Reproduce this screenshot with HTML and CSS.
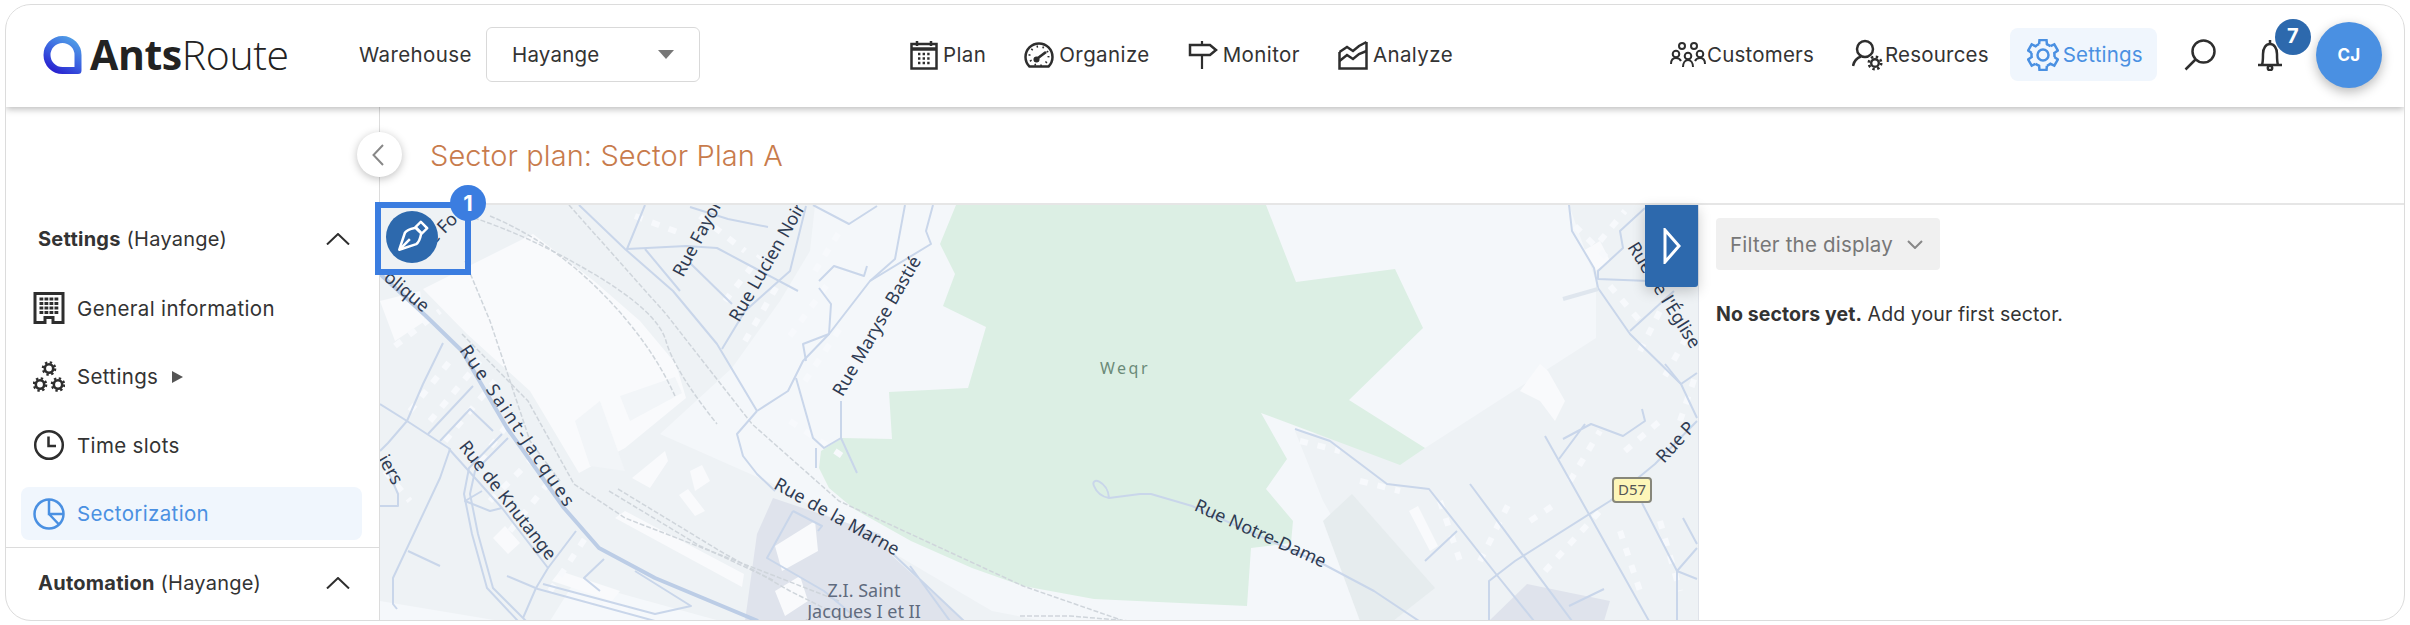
FILE: index.html
```html
<!DOCTYPE html>
<html lang="en">
<head>
  <meta charset="UTF-8">
  <title>AntsRoute - Sector plan</title>
  <link rel="stylesheet" href="styles.css">
</head>
<body>
  <div class="window">
    <header class="topbar">
      <a class="brand" href="#">
        <svg class="brand-mark" width="39" height="38" viewBox="0 0 39 38">
          <defs>
            <linearGradient id="logoGrad" x1="0.8" y1="0" x2="0.2" y2="1">
              <stop offset="0" stop-color="#4f9ae6"/>
              <stop offset="0.55" stop-color="#3a5fe0"/>
              <stop offset="1" stop-color="#2a24d0"/>
            </linearGradient>
          </defs>
          <path d="M35 34.500H19.500A15.500 15.500 0 1 1 35 19z" fill="none" stroke="url(#logoGrad)" stroke-width="7" stroke-linejoin="round"/>
        </svg>
        <span class="brand-name"><b>Ants</b>Route</span>
      </a>
      <span class="wh-label">Warehouse</span>
      <div class="wh-select">Hayange<i class="caret"></i></div>

      <nav class="nav-main">
        <a class="nav-item" href="#">
          <svg width="28" height="30" viewBox="0 0 28 30" class="ico">
            <rect x="1.500" y="4" width="25" height="24.500"/>
            <path d="M1.500 9h25" stroke-width="3.500"/>
            <path d="M7 1v5M21 1v5"/>
            <path d="M8 14h13M8 18.500h13M8 23h13" stroke-width="2.500" stroke-dasharray="2.400 2.200"/>
          </svg>
          Plan
        </a>
        <a class="nav-item" href="#">
          <svg width="30" height="26" viewBox="0 0 30 26" class="ico">
            <path d="M5.500 24.500a13.500 13.500 0 1 1 19 0z"/>
            <circle cx="15" cy="14" r="9.500" stroke-width="2" stroke-dasharray="1.500 4.500"/>
            <path d="M12 17.500L22 10" stroke-width="2.800"/>
            <circle cx="12.500" cy="17.500" r="1.800" class="solid"/>
          </svg>
          Organize
        </a>
        <a class="nav-item" href="#">
          <svg width="30" height="28" viewBox="0 0 30 28" class="ico">
            <path d="M14 0v4M14 14v14" stroke-width="2.200"/>
            <path d="M2 4h20l6 5-6 5H2z"/>
          </svg>
          Monitor
        </a>
        <a class="nav-item" href="#">
          <svg width="30" height="30" viewBox="0 0 30 30" class="ico">
            <path d="M1.500 12v16.500H28.500V2"/>
            <path d="M1.500 12L9 7l6 4 6-5 7.500-4"/>
            <path d="M1.500 21L9 15l6 4 6-5 7.500-3"/>
          </svg>
          Analyze
        </a>
      </nav>

      <nav class="nav-right">
        <a class="nav-item" href="#">
          <svg width="36" height="26" viewBox="0 0 36 26" class="ico thin">
            <circle cx="12" cy="4" r="3"/><circle cx="24" cy="4" r="3"/>
            <circle cx="6" cy="12" r="3.300"/><circle cx="18" cy="14" r="3.300"/><circle cx="30" cy="12" r="3.300"/>
            <path d="M1 22c0-4 2-6 5-6s4 1 5 3M13 25c0-4 2-7 5-7s5 3 5 7M25 19c1-2 2-3 5-3s5 2 5 6"/>
          </svg>
          Customers
        </a>
        <a class="nav-item" href="#">
          <svg width="32" height="32" viewBox="0 0 32 32" class="ico">
            <circle cx="13" cy="10" r="8"/>
            <path d="M1 27c1-5 4-8 8-9.500"/>
            <circle cx="23" cy="24" r="3.800" stroke-width="2.400"/>
            <circle cx="23" cy="24" r="6.200" stroke-width="2.600" stroke-dasharray="2.400 2.470"/>
          </svg>
          Resources
        </a>
        <a class="nav-item is-active" href="#">
          <svg width="32" height="32" viewBox="0 0 32 32" class="ico blue">
            <path d="M12.100 5.200L12.500.9h7l.4 4.300A11.500 11.500 0 0 1 23.400 7.200"/>
            <path d="M12.100 5.200L12.500.9h7l.4 4.300A11.500 11.500 0 0 1 23.400 7.200" transform="rotate(60 16 16)"/>
            <path d="M12.100 5.200L12.500.9h7l.4 4.300A11.500 11.500 0 0 1 23.400 7.200" transform="rotate(120 16 16)"/>
            <path d="M12.100 5.200L12.500.9h7l.4 4.300A11.500 11.500 0 0 1 23.400 7.200" transform="rotate(180 16 16)"/>
            <path d="M12.100 5.200L12.500.9h7l.4 4.300A11.500 11.500 0 0 1 23.400 7.200" transform="rotate(240 16 16)"/>
            <path d="M12.100 5.200L12.500.9h7l.4 4.300A11.500 11.500 0 0 1 23.400 7.200" transform="rotate(300 16 16)"/>
            <circle cx="16" cy="16" r="5.500"/>
          </svg>
          Settings
        </a>
        <a class="tool-btn search" href="#">
          <svg width="32" height="32" viewBox="0 0 32 32" class="ico">
            <circle cx="19.500" cy="12.500" r="11"/>
            <path d="M11.500 20.500L1.500 30.500"/>
          </svg>
        </a>
        <a class="tool-btn bell" href="#">
          <svg width="26" height="32" viewBox="0 0 26 32" class="ico">
            <path d="M13 1v3"/>
            <path d="M1 26h24M5 26c1-3 1-7 1-11 0-6 3-10 7-10s7 4 7 10c0 4 0 8 1 11"/>
            <circle cx="13" cy="29" r="2.200"/>
          </svg>
          <span class="bell-count">7</span>
        </a>
        <a class="avatar" href="#">CJ</a>
      </nav>
    </header>

    <div class="body">
      <aside class="sidebar">
        <div class="side-head">
          <span><b>Settings</b> (Hayange)</span>
          <svg width="24" height="12" viewBox="0 0 24 12" class="ico thin"><path d="M1 11.500L12 1l11 10.500"/></svg>
        </div>
        <a class="side-item" href="#">
          <svg width="32" height="32" viewBox="0 0 32 32" class="ico">
            <path d="M2 1.500h28v29H20v-5h-8v5H2z" stroke-width="3"/>
            <path d="M6.500 7h19M6.500 11.500h19M6.500 16h19M6.500 20.500h19" stroke-width="3" stroke-dasharray="3.800 1.200"/>
          </svg>
          General information
        </a>
        <a class="side-item" href="#">
          <svg width="32" height="32" viewBox="0 0 32 32" class="ico">
            <circle cx="16" cy="7.500" r="4.200" stroke-width="2.600"/>
            <circle cx="16" cy="7.500" r="6.200" stroke-width="2.200" stroke-dasharray="2.400 2.470"/>
            <circle cx="7" cy="23.500" r="4.200" stroke-width="2.600"/>
            <circle cx="7" cy="23.500" r="6.200" stroke-width="2.200" stroke-dasharray="2.400 2.470"/>
            <circle cx="25" cy="23.500" r="4.200" stroke-width="2.600"/>
            <circle cx="25" cy="23.500" r="6.200" stroke-width="2.200" stroke-dasharray="2.400 2.470"/>
          </svg>
          Settings
          <i class="side-arrow"></i>
        </a>
        <a class="side-item" href="#">
          <svg width="32" height="32" viewBox="0 0 32 32" class="ico">
            <circle cx="16" cy="16" r="13.800"/>
            <path d="M15.500 7.500v9.500H23"/>
          </svg>
          Time slots
        </a>
        <a class="side-item is-active" href="#">
          <svg width="32" height="32" viewBox="0 0 32 32" class="ico blue">
            <circle cx="16" cy="16" r="14.500"/>
            <path d="M16 1.500V16h14.500M16 16l10 10.500"/>
          </svg>
          Sectorization
        </a>
        <div class="side-head side-head-line">
          <span><b>Automation</b> (Hayange)</span>
          <svg width="24" height="12" viewBox="0 0 24 12" class="ico thin"><path d="M1 11.500L12 1l11 10.500"/></svg>
        </div>
      </aside>

      <main class="main">
        <button class="collapse-btn">
          <svg width="12" height="22" viewBox="0 0 12 22" class="ico grey thin"><path d="M11 1L1.500 11 11 21"/></svg>
        </button>
        <h1 class="page-title">Sector plan: Sector Plan A</h1>
        <div class="workspace">
          <div class="map">
            <svg class="map-svg" width="1318" height="416" viewBox="380 204 1318 416">
              <rect x="380" y="204" width="1318" height="416" class="m-base"/>

              <!-- areas -->
              <path class="m-light" d="M815 204L810 250 780 300 732 367 660 433 773 483 890 550 992 610 1043 620H1440L1393 620 1323 500 1295 430 1425 447 1596 337V280L1569 204z"/>
              <path class="m-white" d="M423 288L533 233 594 280 640 320 676 363 686 397 625 447 579 472 530 390 467 333z"/>
              <path class="m-faint" d="M620 395L675 376 682 392 630 420zM575 420L600 400 625 470 590 465z"/>
              <path class="m-lighter" d="M380 620V600L500 620zM550 620L575 580 720 620z"/>
              <path class="m-green" d="M956 204L940 243 955 273 943 305 986 326 968 387 889 391 892 438 842 437 821 450 819 467 829 487 854 508 911 540 972 567 1023 585 1094 598 1180 602 1247 605 1251 547 1291 542 1293 520 1266 488 1287 458 1261 412 1400 464 1425 447 1349 399 1423 327 1395 268 1296 281 1266 204z"/>
              <path class="m-forestry" d="M1352 493L1435 587 1393 620H1360L1323 520z"/>
              <path class="m-zone" d="M773 497L880 533 890 553 964 620H745L757 533z"/>
              <path class="m-zone" d="M1489 620L1527 583 1610 600 1604 620z"/>

              <!-- blocks -->
              <path class="m-white" d="M615 517L625 510 744 573 742 586zM632 477L665 450 668 460 650 487zM690 470L702 464 710 480 695 490zM679 494L688 488 705 510 695 515zM493 537L505 525 520 542 508 553zM775 545L815 520 818 550 782 570zM775 590L800 575 808 600 785 615zM1409 510L1418 505 1438 545 1430 550zM1540 363L1548 370 1565 400 1555 420 1540 400 1520 390z"/>
              <path class="m-white" d="M380 300L420 290 425 320 395 340zM560 570L620 590 612 600 552 580zM1583 250L1600 240 1610 260 1595 270z"/>

              <!-- houses -->
              <path class="m-houses" d="M635 215L680 232M700 215L745 250M725 300L760 255M745 340L780 280M815 270L840 230M790 335L830 280M805 380L845 320M875 340L905 280M790 420L850 460"/>
              <path class="m-houses" d="M395 345L440 310M410 410L450 360M385 470L410 500M430 420L480 360M445 440L495 380M480 460L510 420M490 500L530 460M510 530L550 480M550 590L590 530M585 600L640 610"/>
              <path class="m-houses" d="M1575 225L1610 260M1600 240L1625 210M1610 285L1640 320M1640 350L1660 310M1665 375L1690 330M1680 420L1697 370M1360 480L1400 490M1300 440L1340 450M1440 500L1460 560M1480 560L1510 500M1530 520L1560 500M1545 570L1600 510M1620 530L1640 590M1660 520L1680 590M1625 450L1660 420M1570 480L1600 430"/>

              <!-- railway -->
              <g class="m-rail">
                <path d="M474 217Q530 235 594 273T666 340 717 423"/>
                <path d="M569 204L666 313 752 423 839 500 1023 585 1124 620"/>
                <path d="M462 333L528 400 574 483 625 517 762 570 839 600"/>
                <path d="M490 215Q550 240 600 290T675 395"/>
                <path d="M609 490L700 545 775 580"/>
                <path d="M618 488L720 550 790 590 850 620"/>
                <path d="M1020 615H1070L1130 620"/>
                <path d="M465 260L490 320 530 440 560 480"/>
              </g>

              <!-- roads -->
              <g class="m-road">
                <path d="M645 204L627 248 686 245 717 247 747 263 798 290"/>
                <path d="M690 206L728 218 768 226"/>
                <path d="M579 204L625 248 673 290 717 343 757 410"/>
                <path d="M757 410L737 433 743 455 757 473 775 490"/>
                <path d="M690 262L732 303"/>
                <path d="M680 290L645 248M722 348L745 310 790 270 806 205"/>
                <path d="M933 204L926 230 931 243 870 280 829 333 803 360 788 390 757 410"/>
                <path d="M819 280L834 265 864 275 867 265M819 287L831 303 829 333 803 343 806 360"/>
                <path d="M841 400L841 437 824 447 813 437 796 377M816 447V467M841 437L857 472"/>
                <path d="M813 204L849 223 877 205M905 204L895 258 870 280"/>
                <path d="M443 342L423 383 407 420 388 442 380 450M380 403L407 420 450 448 440 477 393 577 393 603 397 608"/>
                <path d="M428 433L473 385M440 440L470 408 493 430M408 550L440 565M380 505H398V493L388 470"/>
                <path d="M502 433L469 467 464 493 472 533 487 587 518 620M508 437L475 470 470 493 478 533 493 587 526 620"/>
                <path d="M449 448L502 507 548 567 536 587 523 617M482 490L465 500 490 510 502 507"/>
                <path d="M507 575L538 588 655 620M543 583L655 613 691 605 635 570M576 530L548 567M604 558L584 577 600 590"/>
                <path d="M793 510L767 557 824 590 860 620M793 510L822 525 818 530M893 553L964 620M910 565L950 620"/>
                <path d="M1569 204L1572 230 1594 267 1598 287 1630 333 1681 383 1697 417"/>
                <path d="M1645 207L1620 230 1623 247 1598 270V278L1649 280M1674 290L1630 330M1697 372L1681 383 1665 363"/>
                <path d="M1697 420L1655 463 1610 500 1515 560 1489 580V620"/>
                <path d="M1545 435L1649 620M1470 483L1572 620"/>
                <path d="M1295 428L1330 440 1387 483 1429 488 1496 573 1534 620"/>
                <path d="M1094 485C1090 475 1108 480 1109 497L1140 493 1151 493 1192 505 1323 563 1374 590 1419 620M1094 485Q1098 495 1109 497"/>
                <path d="M1457 530L1425 560M1642 502L1677 570 1697 578M1697 547L1677 570V620M1604 588L1569 605M1683 517L1697 543"/>
                <path d="M1563 438L1591 423 1623 435 1645 420 1642 408M1559 458L1585 423"/>
                <path class="m-road-pale" d="M1563 298L1598 288"/>
              </g>
              <path class="m-road-major" d="M380 273L426 315 462 350 507 427 564 507 599 547 655 577 758 620"/>

              <!-- labels -->
              <g class="m-label">
                <text x="423" y="312" text-anchor="end" transform="rotate(40 423 312)">olique</text>
                <text x="434" y="244" transform="rotate(-45 434 244)">e Fo</text>
                <text x="393" y="485" text-anchor="end" transform="rotate(60 393 485)">iers</text>
                <text x="512" y="428" text-anchor="middle" transform="rotate(56 512 428)" textLength="190">Rue Saint-Jacques</text>
                <text x="503" y="503" text-anchor="middle" transform="rotate(52 503 503)" textLength="145">Rue de Knutange</text>
                <text x="683" y="277" transform="rotate(-62 683 277)">Rue Fayol</text>
                <text x="739" y="322" transform="rotate(-60 739 322)">Rue Lucien Noir</text>
                <text x="882" y="328" text-anchor="middle" transform="rotate(-60 882 328)" textLength="158">Rue Maryse Bastié</text>
                <text x="834" y="521" text-anchor="middle" transform="rotate(29 834 521)" textLength="140">Rue de la Marne</text>
                <text x="1258" y="538" text-anchor="middle" transform="rotate(24 1258 538)" textLength="142">Rue Notre-Dame</text>
                <text x="1627" y="246" transform="rotate(58 1627 246)">Rue de l'Église</text>
                <text x="1664" y="463" transform="rotate(-48 1664 463)">Rue P</text>
              </g>
              <text class="m-wood" x="1125" y="373" text-anchor="middle">Weqr</text>
              <text class="m-place" x="864" y="596" text-anchor="middle">Z.I. Saint</text>
              <text class="m-place" x="864" y="617" text-anchor="middle">Jacques I et II</text>
              <rect class="m-shield" x="1613" y="477" width="38" height="24" rx="3"/>
              <text class="m-shield-text" x="1632" y="494" text-anchor="middle">D57</text>
            </svg>

            <div class="draw-tool">
              <span class="draw-btn">
                <svg width="52" height="52" viewBox="0 0 52 52">
                  <g class="nib" transform="translate(26 26) rotate(45)">
                    <path d="M0 18L-8 2C-9 -2 -6 -6 -4 -9H4C6 -6 9 -2 8 2z"/>
                    <path d="M0 17V3"/>
                    <rect x="-4.500" y="-17" width="9" height="7.500"/>
                  </g>
                </svg>
              </span>
              <span class="step-badge">1</span>
            </div>
            <button class="panel-toggle">
              <svg width="18" height="36" viewBox="0 0 18 36"><path d="M2 2L16 18 2 34z"/></svg>
            </button>
          </div>

          <section class="panel">
            <div class="filter-btn">
              Filter the display
              <svg width="16" height="9" viewBox="0 0 16 9" class="ico grey thin"><path d="M1 1l7 7 7-7"/></svg>
            </div>
            <p class="empty-note"><b>No sectors yet.</b> Add your first sector.</p>
          </section>
        </div>
      </main>
    </div>
  </div>
</body>
</html>
```

FILE: styles.css
```css
* {
  box-sizing: border-box;
}

html, body {
  margin: 0;
  padding: 0;
  height: 100%;
  background-color: #fff;
  font-family: Inter, "Open Sans", sans-serif;
  color: #333;
  overflow: hidden;
}

a {
  color: inherit;
  text-decoration: none;
}

.window {
  display: flex;
  flex-direction: column;
  height: 617px;
  margin: 4px 5px 0;
  background-color: #fff;
  border: 1px solid #dcdcdc;
  border-radius: 26px;
  overflow: hidden;
}

/* icons */
.ico {
  flex: none;
  fill: none;
  stroke: #2e2e2e;
  stroke-width: 2.5;
}

.ico.thin {
  stroke-width: 2;
}

.ico.blue {
  stroke: #4a90e2;
}

.ico.grey {
  stroke: #888;
}

.ico .solid {
  fill: #2e2e2e;
}

/* top bar */
.topbar {
  position: relative;
  z-index: 3;
  display: flex;
  align-items: center;
  flex: none;
  height: 102px;
  padding: 0 0 3px 37px;
  background-color: #fff;
  box-shadow: 0 2px 7px rgba(0, 0, 0, 0.28);
}

.brand {
  display: flex;
  align-items: center;
  gap: 8px;
  width: 316px;
}

.brand-name {
  font-family: "Open Sans", sans-serif;
  font-size: 41px;
  font-weight: 300;
  letter-spacing: -0.4px;
  line-height: 1;
  color: #222;
}

.brand-name b {
  font-weight: 700;
}

.wh-label {
  width: 127px;
  font-size: 20.500px;
  letter-spacing: 0.4px;
}

.wh-select {
  display: flex;
  align-items: center;
  justify-content: space-between;
  width: 214px;
  height: 55px;
  padding: 0 25px;
  border: 1px solid #d9d9d9;
  border-radius: 6px;
  font-size: 20.500px;
  letter-spacing: 0.2px;
}

.caret {
  width: 0;
  height: 0;
  border-left: 8px solid transparent;
  border-right: 8px solid transparent;
  border-top: 9px solid #777;
}

.nav-main {
  display: flex;
  align-items: center;
  gap: 38px;
  margin-left: 210px;
}

.nav-right {
  display: flex;
  align-items: center;
  gap: 38px;
  margin-left: 217px;
}

.nav-item {
  display: flex;
  align-items: center;
  gap: 5px;
  font-size: 20.500px;
  letter-spacing: 0.4px;
  white-space: nowrap;
}

.nav-right .nav-item {
  gap: 1px;
  letter-spacing: 0.2px;
}

.nav-right .nav-item.is-active {
  gap: 4px;
  height: 53px;
  margin: 0 -17px;
  padding: 0 14px 0 17px;
  background-color: #f0f6fd;
  border-radius: 8px;
  color: #4a90e2;
}

.tool-btn {
  position: relative;
  display: flex;
}

.tool-btn.search {
  margin-left: 6px;
}

.tool-btn.bell {
  margin-left: 3px;
}

.bell-count {
  position: absolute;
  top: -20px;
  left: 18px;
  width: 36px;
  height: 36px;
  border-radius: 50%;
  background-color: #2d69ad;
  color: #fff;
  font-size: 20px;
  font-weight: 700;
  line-height: 34px;
  text-align: center;
}

.avatar {
  width: 66px;
  height: 66px;
  margin-left: -5px;
  border-radius: 50%;
  background-color: #4a90e2;
  box-shadow: 0 4px 12px rgba(0, 0, 0, 0.28);
  color: #fff;
  font-size: 17px;
  font-weight: 700;
  line-height: 66px;
  text-align: center;
}

/* layout below the bar */
.body {
  display: flex;
  flex: 1;
  min-height: 0;
}

.sidebar {
  flex: none;
  width: 374px;
  padding-top: 97px;
  border-right: 1px solid #dcdcdc;
}

.side-head {
  display: flex;
  align-items: center;
  justify-content: space-between;
  height: 70px;
  padding: 0 29px 0 32px;
  font-size: 20px;
  letter-spacing: 0.25px;
}

.side-head b {
  font-weight: 700;
}

.side-head-line {
  margin-top: 7px;
  border-top: 1px solid #dcdcdc;
}

.side-item {
  display: flex;
  align-items: center;
  gap: 12px;
  height: 53px;
  margin: 0 17px 15.500px 15px;
  padding-left: 12px;
  border-radius: 8px;
  font-size: 20.500px;
  letter-spacing: 0.35px;
}

.side-head + .side-item {
  margin-top: 7.500px;
}

.side-item.is-active {
  margin-bottom: 0;
  background-color: #f0f6fd;
  color: #4a90e2;
}

.side-arrow {
  width: 0;
  height: 0;
  margin-left: 2px;
  border-top: 6px solid transparent;
  border-bottom: 6px solid transparent;
  border-left: 11px solid #555;
}

.main {
  position: relative;
  display: flex;
  flex-direction: column;
  flex: 1;
  min-width: 0;
}

.collapse-btn {
  position: absolute;
  top: 25px;
  left: -23px;
  z-index: 2;
  display: flex;
  align-items: center;
  justify-content: center;
  width: 45px;
  height: 45px;
  padding: 0 3px 0 0;
  background-color: #fff;
  border: 0;
  border-radius: 50%;
  box-shadow: 0 2px 8px rgba(0, 0, 0, 0.25);
}

.page-title {
  display: flex;
  align-items: center;
  flex: none;
  height: 96px;
  margin: 0;
  padding-left: 50px;
  font-size: 29px;
  font-weight: 300;
  letter-spacing: 0.1px;
  color: #c87b4c;
}

.workspace {
  display: flex;
  flex: 1;
  min-height: 0;
  border-top: 2px solid #e6e6e6;
}

/* map */
.map {
  position: relative;
  flex: none;
  width: 1318px;
}

.map-svg {
  display: block;
}

.m-base { fill: #eef2f5; }
.m-faint { fill: #f2f5f8; }
.m-light { fill: #f4f7fa; }
.m-lighter { fill: #f5f8fb; }
.m-white { fill: #f9fafc; }
.m-green { fill: #dcefe4; }
.m-forestry { fill: #e6ecee; }
.m-zone { fill: #dfe3ec; }

.m-houses {
  fill: none;
  stroke: #f7f9fc;
  stroke-width: 6;
  stroke-dasharray: 8 10;
}

.m-rail {
  fill: none;
  stroke: #cfd5db;
  stroke-width: 1.500;
  stroke-dasharray: 5 2;
}

.m-road {
  fill: none;
  stroke: #c9d6ea;
  stroke-width: 2;
  stroke-linejoin: round;
}

.m-road-pale {
  stroke: #dfe6ee;
  stroke-width: 4;
}

.m-road-major {
  fill: none;
  stroke: #bccde6;
  stroke-width: 4;
  stroke-linejoin: round;
}

.m-label {
  font-family: "Noto Sans", sans-serif;
  font-size: 18px;
  fill: #2f3b52;
}

.m-wood {
  font-family: "Noto Sans", sans-serif;
  font-size: 16px;
  letter-spacing: 2.500px;
  fill: #6b8a78;
}

.m-place {
  font-family: "Noto Sans", sans-serif;
  font-size: 18px;
  fill: #5f6b7e;
}

.m-shield {
  fill: #fdf6b8;
  stroke: #87877a;
  stroke-width: 2;
}

.m-shield-text {
  font-family: "Noto Sans", sans-serif;
  font-size: 15px;
  fill: #555;
}

.draw-tool {
  position: absolute;
  top: -3px;
  left: -5px;
  width: 96px;
  height: 73px;
  border: 6px solid #3b7de0;
}

.draw-btn {
  position: absolute;
  top: 3px;
  left: 5px;
  display: block;
  width: 52px;
  height: 52px;
  border-radius: 50%;
  background-color: #2d69ad;
}

.nib {
  fill: none;
  stroke: #fff;
  stroke-width: 2.500;
  stroke-linejoin: round;
}

.step-badge {
  position: absolute;
  top: -23px;
  right: -21px;
  width: 36px;
  height: 36px;
  border-radius: 50%;
  background-color: #3b7de0;
  color: #fff;
  font-size: 22px;
  font-weight: 700;
  line-height: 36px;
  text-align: center;
}

.panel-toggle {
  position: absolute;
  top: 0;
  right: 0;
  display: flex;
  align-items: center;
  justify-content: center;
  width: 53px;
  height: 82px;
  padding: 0;
  background-color: #2d69ad;
  border: 0;
  border-radius: 0 0 3px 3px;
  box-shadow: 0 4px 14px rgba(0, 0, 0, 0.2);
}

.panel-toggle path {
  fill: none;
  stroke: #fff;
  stroke-width: 3;
}

/* right panel */
.panel {
  flex: 1;
  padding: 13px 17px;
  border-left: 1px solid #dfe3ea;
}

.filter-btn {
  display: inline-flex;
  align-items: center;
  gap: 14px;
  width: 224px;
  height: 52px;
  padding-left: 14px;
  background-color: #f0f0f0;
  border-radius: 4px;
  font-size: 20.500px;
  letter-spacing: 0.2px;
  color: #777;
  white-space: nowrap;
}

.empty-note {
  margin: 28px 0 0;
  font-size: 19.500px;
  letter-spacing: 0.1px;
  line-height: 32px;
  color: #333;
}

.empty-note b {
  font-weight: 700;
}
```
